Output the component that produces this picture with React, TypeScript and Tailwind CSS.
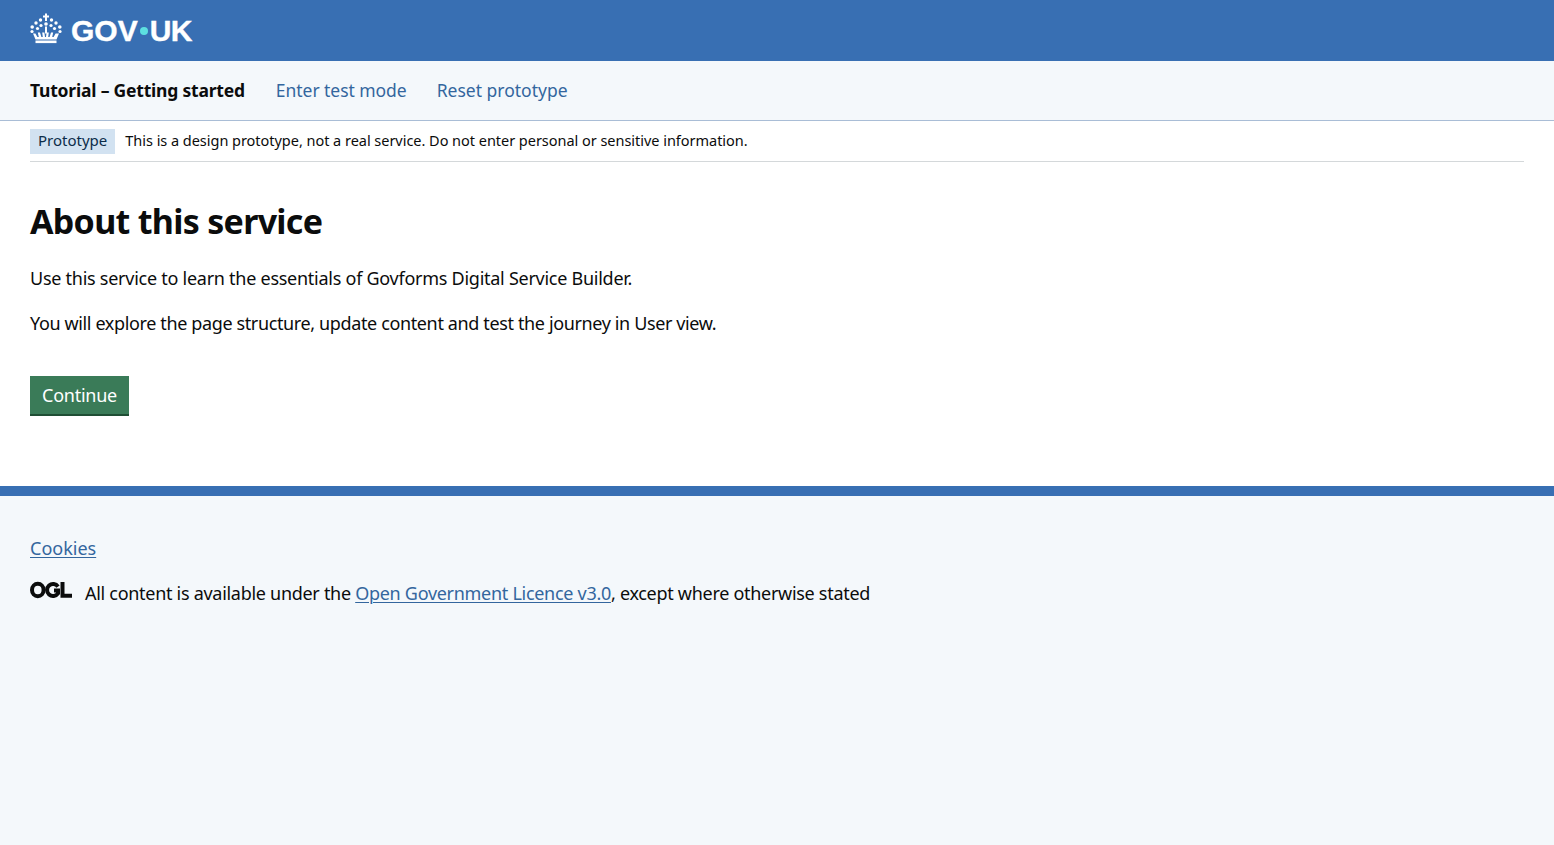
export default function App() {
  return (
    <div className="min-h-[845px] flex flex-col bg-white text-[#0b0c0c] font-['Noto_Sans',sans-serif]">
      <header className="h-[61px] bg-[#386fb3] flex items-center px-[30px] shrink-0">
        <svg viewBox="0 0 32 30" className="w-[32px] h-[31px] mr-[9px] mb-[5px]" fill="#fff">
          <rect x="15" y="0" width="2" height="7.5" />
          <rect x="13" y="2" width="6" height="2" />
          <circle cx="10.5" cy="6.5" r="1.7" /><circle cx="21.5" cy="6.5" r="1.7" />
          <circle cx="6" cy="9.5" r="1.7" /><circle cx="26" cy="9.5" r="1.7" />
          <circle cx="2.2" cy="13.5" r="1.8" /><circle cx="29.8" cy="13.5" r="1.8" />
          <circle cx="2" cy="18" r="1.6" /><circle cx="30" cy="18" r="1.6" />
          <circle cx="16" cy="10.5" r="1.8" /><circle cx="11" cy="12" r="1.6" /><circle cx="21" cy="12" r="1.6" />
          <circle cx="7.5" cy="15" r="1.6" /><circle cx="24.5" cy="15" r="1.6" />
          <rect x="15" y="13" width="2" height="7" />
          <path d="M3 20h2.4l2 3.6h1.4l-1-4.6h2.2l1.4 4.6h1.4l-.6-4.6h2.2l.6 4.6h1l.6-4.6h2.2l-.6 4.6h1.4l1.4-4.6h2.2l-1 4.6h1.4l2-3.6H29l-2.5 6h-21z" />
          <rect x="5.5" y="27" width="21" height="2.6" />
        </svg>
        <span className="text-[30px] leading-none font-bold text-white font-['Liberation_Sans',sans-serif] mb-[-1px] flex items-center [-webkit-text-stroke:0.4px_white]">
          GOV<span className="w-[8px] h-[8px] mx-[2px] rounded-full bg-[#5de0e0] inline-block"></span><span className="tracking-[-0.6px]">UK</span>
        </span>
      </header>

      <nav className="h-[59px] bg-[#f4f8fb] flex items-center gap-[30px] px-[30px] text-[17.5px] shrink-0">
        <span className="font-bold text-[#0b0c0c] tracking-[-0.2px] mr-[1px]">Tutorial – Getting started</span>
        <span className="text-[#33669e] tracking-[-0.05px]">Enter test mode</span>
        <span className="text-[#33669e]">Reset prototype</span>
      </nav>
      <div className="h-px bg-[#a9bdd6] shrink-0"></div>

      <div className="mx-[30px] h-[41px] border-b border-[#d4d8da] flex items-center gap-[10px] shrink-0">
        <span className="h-[25px] px-2 pb-px bg-[#d2e2f1] text-[#0c2d4a] text-[15px] flex items-center">Prototype</span>
        <span className="text-[14.5px] tracking-[-0.03px]">This is a design prototype, not a real service. Do not enter personal or sensitive information.</span>
      </div>

      <main className="px-[30px] h-[324px] shrink-0">
        <h1 className="text-[34px] leading-[40px] font-bold tracking-[-0.7px] mt-[39px] mb-[25px]">About this service</h1>
        <p className="text-[18px] leading-[25px] tracking-[-0.26px] mb-[20px]">Use this service to learn the essentials of Govforms Digital Service Builder.</p>
        <p className="text-[18px] leading-[25px] tracking-[-0.37px] mb-[40px]">You will explore the page structure, update content and test the journey in User view.</p>
        <button className="h-[40px] px-3 bg-[#3a7b58] text-white text-[18px] tracking-[-0.25px] border-b-2 border-[#1f4e34] flex items-center">Continue</button>
      </main>

      <footer className="flex-1 bg-[#f4f8fb] border-t-[10px] border-[#386fb3] px-[30px] pt-[40px]">
        <a className="text-[18px] leading-[25px] text-[#33669e] underline underline-offset-2 decoration-1 block w-fit">Cookies</a>
        <div className="flex items-center mt-[20px] text-[18px] leading-[25px] tracking-[-0.29px]">
          <svg viewBox="0 0 42 18" className="w-[42px] h-[18px] mr-[13px] mb-[7px]" fill="none" stroke="#0b0c0c" strokeWidth="4">
            <ellipse cx="7.8" cy="9" rx="5.8" ry="6.2" />
            <path d="M28 5.6a6 6 0 1 0 0 6.8V9.5h-4" />
            <path d="M32.5 1v13.8h9.5" />
          </svg>
          <span>
            All content is available under the{" "}
            <a className="text-[#33669e] underline underline-offset-2 decoration-1">Open Government Licence v3.0</a>
            , except where otherwise stated
          </span>
        </div>
      </footer>
    </div>
  );
}
